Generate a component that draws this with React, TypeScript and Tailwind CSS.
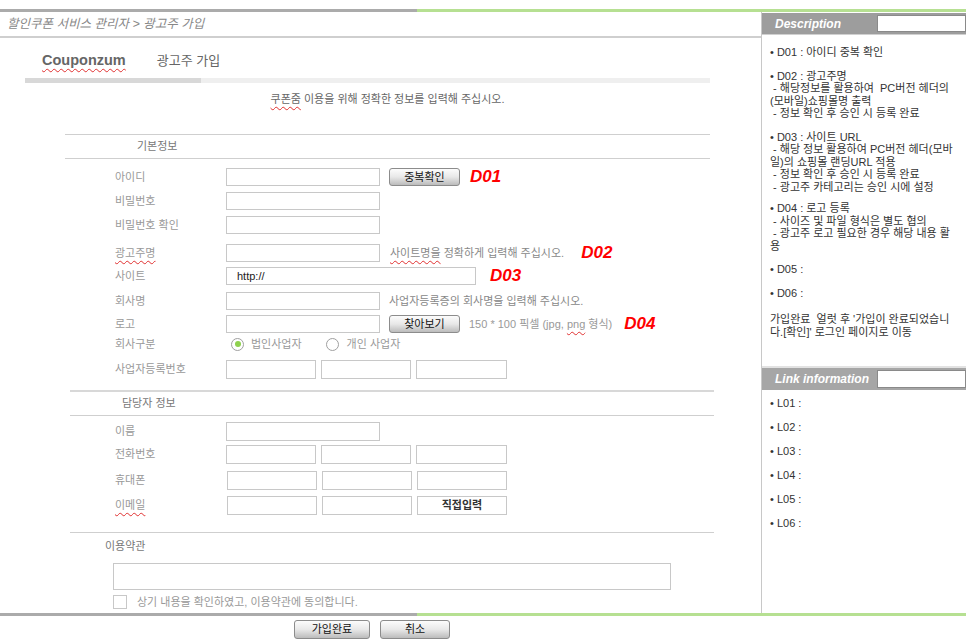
import type { ReactNode } from 'react'

const wavy = 'underline decoration-wavy decoration-[#e03030] decoration-1 underline-offset-[3px]'

function Field({ w, h = 'h-[18px]' }: { w: string; h?: string }) {
  return <div className={`${w} ${h} shrink-0 border border-[#c8c8c8] bg-white`} />
}

function GrayButton({ children, w = 'w-[71px]', h = 'h-[18px]' }: { children: ReactNode; w?: string; h?: string }) {
  return (
    <div
      className={`${w} ${h} flex shrink-0 items-center justify-center rounded-[3px] border border-[#8c8c8c] bg-linear-to-b from-[#fcfcfc] via-[#e8e8e8] to-[#bcbcbc] text-[11px] text-[#111]`}
    >
      {children}
    </div>
  )
}

function Tag({ children }: { children: ReactNode }) {
  return <span className="text-[17px] font-bold italic leading-none text-[#ff0000]">{children}</span>
}

function Row({ label, mt, h = 'h-[18px]', children }: { label: ReactNode; mt: string; h?: string; children?: ReactNode }) {
  return (
    <div className={`flex items-center ${mt} ${h}`}>
      <div className="w-[161px] shrink-0 pl-[50px] text-[#999]">{label}</div>
      <div className="flex items-center">{children}</div>
    </div>
  )
}

function Radio({ checked }: { checked?: boolean }) {
  return (
    <div className="flex h-[13px] w-[13px] items-center justify-center rounded-full border border-[#a0a0a0] bg-white">
      {checked && <div className="h-[6px] w-[6px] rounded-full bg-[#8fd14f]" />}
    </div>
  )
}

function Split() {
  return (
    <div className="flex h-[3px]">
      <div className="w-[417px] bg-[#ababab]" />
      <div className="flex-1 bg-[#b6e092]" />
    </div>
  )
}

export default function App() {
  return (
    <div className="h-[640px] w-[966px] overflow-hidden bg-white pt-[9px] font-['Liberation_Sans','Noto_Sans_CJK_KR',sans-serif] text-[11px]">
      <Split />
      <div className="flex h-[601px]">
        {/* left: form */}
        <main className="w-[761px] shrink-0">
          <div className="flex h-[26px] items-center border-b-2 border-[#cfcfcf] pl-[7px] text-[12.5px] italic text-[#888]">
            할인쿠폰 서비스 관리자 &gt; 광고주 가입
          </div>
          <div className="flex h-[40px] items-center gap-[31px] pl-[42px] pt-[6px] text-[#666]">
            <span className={`text-[14.5px] font-bold ${wavy}`}>Couponzum</span>
            <span className="text-[13px]">광고주 가입</span>
          </div>
          <div className="ml-[25px] flex h-[5px] w-[685px]">
            <div className="w-[176px] bg-[#d8d8d8]" />
            <div className="flex-1 bg-[#efefef]" />
          </div>
          <div className="ml-[65px] flex h-[32px] w-[645px] items-center justify-center text-[#666]">
            <span>
              <span className={wavy}>쿠폰줌</span> 이용을 위해 정확한 정보를 입력해 주십시오.
            </span>
          </div>

          <div className="ml-[65px] mt-[19px] w-[649px]">
            <div className="flex h-[25px] w-[645px] items-center border-y border-[#cfcfcf] pl-[72px] text-[#777]">기본정보</div>
            <Row label="아이디" mt="mt-[9px]">
              <Field w="w-[154px]" />
              <div className="ml-[9px]">
                <GrayButton>중복확인</GrayButton>
              </div>
              <div className="ml-[10px]">
                <Tag>D01</Tag>
              </div>
            </Row>
            <Row label="비밀번호" mt="mt-[6px]">
              <Field w="w-[154px]" />
            </Row>
            <Row label="비밀번호 확인" mt="mt-[6px]">
              <Field w="w-[154px]" />
            </Row>
            <Row label={<span className={wavy}>광고주명</span>} mt="mt-[10px]">
              <Field w="w-[154px]" />
              <span className="ml-[10px] text-[#888]">
                <span className={wavy}>사이트명을</span> 정확하게 입력해 주십시오.
              </span>
              <div className="ml-[17px]">
                <Tag>D02</Tag>
              </div>
            </Row>
            <Row label="사이트" mt="mt-[5px]">
              <div className="flex h-[18px] w-[250px] items-center border border-[#c8c8c8] pl-[10px] text-[#222]">http://</div>
              <div className="ml-[14px]">
                <Tag>D03</Tag>
              </div>
            </Row>
            <Row label="회사명" mt="mt-[7px]">
              <Field w="w-[154px]" />
              <span className="ml-[9px] text-[#888]">사업자등록증의 회사명을 입력해 주십시오.</span>
            </Row>
            <Row label="로고" mt="mt-[5px]">
              <Field w="w-[154px]" />
              <div className="ml-[9px]">
                <GrayButton>찾아보기</GrayButton>
              </div>
              <span className="ml-[9px] text-[#999]">
                150 * 100 픽셀 (jpg, <span className={wavy}>png</span> 형식)
              </span>
              <div className="ml-[12px]">
                <Tag>D04</Tag>
              </div>
            </Row>
            <Row label="회사구분" mt="mt-[2px]">
              <div className="ml-[5px] flex items-center gap-[7px] text-[#999]">
                <Radio checked />
                <span>법인사업자</span>
              </div>
              <div className="ml-[24px] flex items-center gap-[8px] text-[#999]">
                <Radio />
                <span>개인 사업자</span>
              </div>
            </Row>
            <Row label="사업자등록번호" mt="mt-[7px]" h="h-[19px]">
              <div className="flex gap-[5px]">
                <Field w="w-[90px]" h="h-[19px]" />
                <Field w="w-[90px]" h="h-[19px]" />
                <Field w="w-[91px]" h="h-[19px]" />
              </div>
            </Row>

            <div className="ml-[5px] mt-[11px] flex h-[26px] w-[644px] items-center border-t-2 border-b border-t-[#d8d8d8] border-b-[#cfcfcf] pl-[52px] text-[#777]">
              담당자 정보
            </div>
            <Row label="이름" mt="mt-[6px]" h="h-[19px]">
              <Field w="w-[154px]" h="h-[19px]" />
            </Row>
            <Row label="전화번호" mt="mt-[4px]" h="h-[19px]">
              <div className="flex gap-[5px]">
                <Field w="w-[90px]" h="h-[19px]" />
                <Field w="w-[90px]" h="h-[19px]" />
                <Field w="w-[91px]" h="h-[19px]" />
              </div>
            </Row>
            <Row label="휴대폰" mt="mt-[7px]" h="h-[19px]">
              <div className="ml-[1px] flex gap-[5px]">
                <Field w="w-[90px]" h="h-[19px]" />
                <Field w="w-[90px]" h="h-[19px]" />
                <Field w="w-[90px]" h="h-[19px]" />
              </div>
            </Row>
            <Row label={<span className={wavy}>이메일</span>} mt="mt-[6px]" h="h-[19px]">
              <div className="ml-[1px] flex gap-[5px]">
                <Field w="w-[90px]" h="h-[19px]" />
                <Field w="w-[90px]" h="h-[19px]" />
                <div className="flex h-[19px] w-[90px] items-center justify-center border border-[#c8c8c8] font-bold text-[#333]">
                  직접입력
                </div>
              </div>
            </Row>

            <div className="ml-[5px] mt-[17px] w-[644px] border-t border-[#cfcfcf]">
              <div className="flex h-[27px] items-center pl-[35px] text-[#777]">이용약관</div>
              <div className="ml-[43px] mt-[3px] h-[27px] w-[558px] border border-[#c8c8c8]" />
              <div className="ml-[43px] mt-[5px] flex h-[14px] items-center">
                <div className="h-[14px] w-[14px] border border-[#c8c8c8]" />
                <span className="ml-[10px] text-[#999]">상기 내용을 확인하였고, 이용약관에 동의합니다.</span>
              </div>
            </div>
          </div>
        </main>

        {/* right: description */}
        <aside className="flex-1 border-l border-[#c8c8c8] text-[#333]">
          <div className="mt-[1px] flex h-[22px] border-b border-[#d0d0d0] bg-[#9d9d9d]">
            <div className="flex w-[115px] items-center pl-[13px] text-[12px] font-bold italic text-white">Description</div>
            <div className="my-[2px] flex-1 border border-[#8a8a8a] bg-white" />
          </div>
          <div className="h-[331px] whitespace-pre pl-[8px] pt-[11px] leading-[12.5px]">
            <div>• D01 : 아이디 중복 확인</div>
            <div className="mt-[11px]">
              <div>• D02 : 광고주명</div>
              <div> - 해당정보를 활용하여  PC버전 헤더의</div>
              <div>(모바일)쇼핑몰명 출력</div>
              <div> - 정보 확인 후 승인 시 등록 완료</div>
            </div>
            <div className="mt-[11px]">
              <div>• D03 : 사이트 URL</div>
              <div> - 해당 정보 활용하여 PC버전 헤더(모바</div>
              <div>일)의 쇼핑몰 랜딩URL 적용</div>
              <div> - 정보 확인 후 승인 시 등록 완료</div>
              <div> - 광고주 카테고리는 승인 시에 설정</div>
            </div>
            <div className="mt-[9px]">
              <div>• D04 : 로고 등록</div>
              <div> - 사이즈 및 파일 형식은 별도 협의</div>
              <div> - 광고주 로고 필요한 경우 해당 내용 활</div>
              <div>용</div>
            </div>
            <div className="mt-[11px]">• D05 :</div>
            <div className="mt-[11px]">• D06 :</div>
            <div className="mt-[14px]">
              <div>가입완료  얼럿 후 '가입이 완료되었습니</div>
              <div>다.[확인]' 로그인 페이지로 이동</div>
            </div>
          </div>
          <div className="flex h-[24px] border-t-2 border-[#e2e2e2] bg-[#a6a6a6]">
            <div className="flex w-[115px] items-center pl-[13px] text-[12px] font-bold italic text-white">Link information</div>
            <div className="my-[2px] flex-1 border border-[#8a8a8a] bg-white" />
          </div>
          <div className="pl-[8px] leading-[13px]">
            <div className="mt-[7px]">• L01 :</div>
            <div className="mt-[11px]">• L02 :</div>
            <div className="mt-[11px]">• L03 :</div>
            <div className="mt-[11px]">• L04 :</div>
            <div className="mt-[11px]">• L05 :</div>
            <div className="mt-[11px]">• L06 :</div>
          </div>
        </aside>
      </div>
      <Split />
      <div className="mt-[4px] flex gap-[10px] pl-[294px]">
        <GrayButton w="w-[76px]" h="h-[19px]">
          가입완료
        </GrayButton>
        <GrayButton w="w-[70px]" h="h-[19px]">
          취소
        </GrayButton>
      </div>
    </div>
  )
}
